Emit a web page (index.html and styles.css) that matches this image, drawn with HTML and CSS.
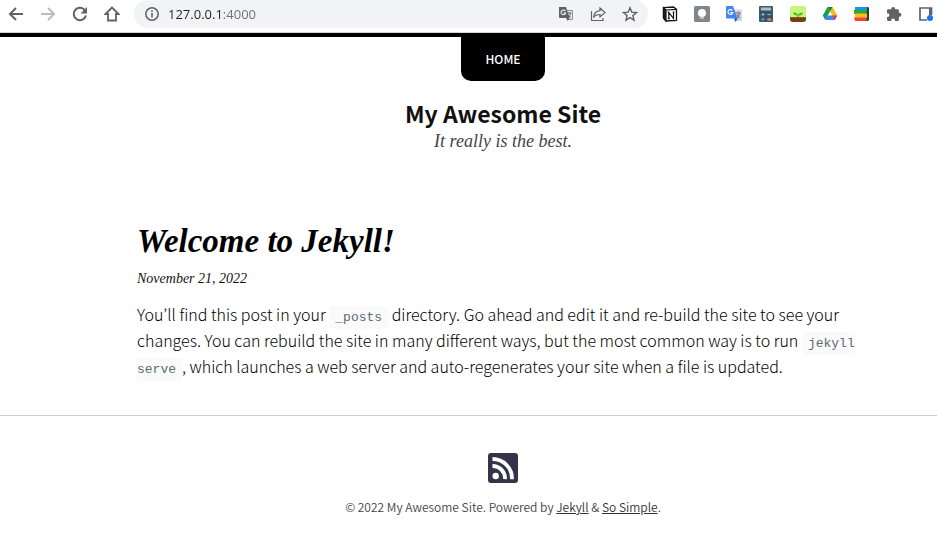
FILE: index.html
```html
<!DOCTYPE html>
<html lang="en">
<head>
<meta charset="utf-8">
<meta name="viewport" content="width=device-width, initial-scale=1">
<title>My Awesome Site</title>
<link rel="stylesheet" href="styles.css">
</head>
<body>
<div class="toolbar">
  <button class="tool" aria-label="Back"><svg viewBox="0 0 16 16" width="16" height="16"><path d="M15 8H2M8 2L2 8l6 6" fill="none" stroke="#5f6368" stroke-width="2"/></svg></button>
  <button class="tool" aria-label="Forward"><svg viewBox="0 0 16 16" width="16" height="16"><path d="M1 8h13M8 2l6 6-6 6" fill="none" stroke="#babcbe" stroke-width="2"/></svg></button>
  <button class="tool" aria-label="Reload"><svg viewBox="0 0 16 16" width="16" height="16"><path d="M13.2 4.6A6.2 6.2 0 1 0 14 9.500" fill="none" stroke="#5f6368" stroke-width="2"/><path d="M15 1v6.500H8.500z" fill="#5f6368"/></svg></button>
  <button class="tool" aria-label="Home"><svg viewBox="0 0 16 16" width="16" height="16"><path d="M8 1.500L1.600 8H4v6.500h8V8h2.400z" fill="none" stroke="#5f6368" stroke-width="1.800"/></svg></button>
  <div class="omnibox">
    <svg viewBox="0 0 14 14" width="14" height="14" aria-hidden="true"><circle cx="7" cy="7" r="6.200" fill="none" stroke="#5f6368" stroke-width="1.500"/><path d="M7 6v4.500M7 3.300v1.600" stroke="#5f6368" stroke-width="1.600"/></svg>
    <input class="address" type="text" value="127.0.0.1:4000" aria-label="Address">
    <button class="tool" aria-label="Translate this page"><svg viewBox="0 0 16 16" width="16" height="16"><path d="M6.500 4.500h7.900v9H9.500" fill="none" stroke="#85888c"/><path d="M1 1h7l3.500 11H2a1 1 0 0 1-1-1z" fill="#5f6368"/><path d="M7.300 5.100A2.300 2.300 0 1 0 7.600 7H5.500" fill="none" stroke="#f1f3f4" stroke-width="1.100"/><path d="M8.500 7h5M11 5.800V7M12.600 7c-.3 2-1.300 3.300-2.900 4.400M9.800 8.200c.6 1.500 1.600 2.600 3.100 3.300" fill="none" stroke="#5f6368"/><path d="M8 12l1.700 3 2-3z" fill="#5f6368"/></svg></button>
    <button class="tool" aria-label="Share"><svg viewBox="0 0 16 16" width="16" height="16"><path d="M1.500 5v9.500H13V12M10 2l5 4.500-5 4.500V8.500C7 8.500 5 9.400 3.500 11.500 4 7.500 6.500 5 10 4.700z" fill="none" stroke="#5f6368" stroke-width="1.200"/></svg></button>
    <button class="tool" aria-label="Bookmark"><svg viewBox="0 0 16 16" width="16" height="16"><path d="M8 1.800l1.800 4.300 4.700.4-3.600 3.100 1.100 4.600-4-2.500-4 2.500 1.100-4.600L1.500 6.500l4.700-.4z" fill="none" stroke="#5f6368" stroke-width="1.400"/></svg></button>
  </div>
  <div class="extensions">
    <button class="tool" aria-label="Notion"><svg viewBox="0 0 16 16" width="16" height="16"><path d="M1.500 1.700L11.500 1l3 2.300v11L4 15l-2.500-3z" fill="#fff" stroke="#111" stroke-width="1.300"/><path d="M1.500 1.700L4 4v11l-2.500-3zM4 4l10.500-.7" fill="#222" stroke="#111" stroke-width="1.200"/><path d="M6.800 12.500V6.500l4.700 6V6M5.800 6.300h1.500M10.700 6.200h1.700M5.800 12.600h2" fill="none" stroke="#111" stroke-width="1.200"/></svg></button>
    <button class="tool" aria-label="Keep"><svg viewBox="0 0 16 16" width="16" height="16"><rect width="16" height="16" rx="1.500" fill="#80868b"/><circle cx="8" cy="7" r="4" fill="#fff"/><path d="M6 9h4v3.500H6z" fill="#fff"/><path d="M6 11.300h4" stroke="#aaa"/></svg></button>
    <button class="tool" aria-label="Google Translate"><svg viewBox="0 0 16 16" width="16" height="16"><path d="M6 3.500h9q1 0 1 1V15H9z" fill="#d5d7da"/><path d="M1 0h6l4.500 12.500H1a1 1 0 0 1-1-1V1a1 1 0 0 1 1-1z" fill="#4285f4"/><path d="M8 12.500h3.500L9.700 16z" fill="#174ea6"/><path d="M6.300 4.500A2.400 2.400 0 1 0 6.700 6.500H4.500" fill="none" stroke="#fff" stroke-width="1.200"/><path d="M9.300 7h5.500M12 5.800V7M13.700 7c-.4 2.300-1.400 3.700-2.700 4.700M10.800 8.500c.7 1.700 1.700 2.800 3.300 3.500" fill="none" stroke="#69777e" stroke-width="1.100"/></svg></button>
    <button class="tool" aria-label="Calculator"><svg viewBox="0 0 16 16" width="16" height="16"><rect x="1" width="14" height="16" rx="1" fill="#3c5a74"/><path d="M3 1.500h10v3H3z" fill="#a9c3b4"/><path d="M1 6h14M8 6V16M1 11.200h14" stroke="#2b455c" stroke-width=".7"/><path d="M3.500 8.500h3M5 7v3M9.500 8.500h3M4 12.300l2 2M6 12.300l-2 2" stroke="#a8bdca" stroke-width=".9"/><path d="M9 12h4.500v3H9z" fill="#b85959"/><path d="M10 13h2.500M10 14.200h2.500" stroke="#e0aaa9" stroke-width=".6"/></svg></button>
    <button class="tool" aria-label="Plant"><svg viewBox="0 0 16 16" width="16" height="16"><rect width="16" height="16" rx="3" fill="#c5f57a"/><path d="M0 11h16v2a3 3 0 0 1-3 3H3a3 3 0 0 1-3-3z" fill="#70401b"/><path d="M0 11.500h16" stroke="#8d5723"/><path d="M8 11V9" stroke="#4a961e"/><path d="M8 9.500C5.500 9.800 3.500 8.700 3 6.500c3-.2 4.700.8 5 3zM8 9.500C8.500 7.500 10 6.500 13 7c-.5 1.800-2.300 2.800-5 2.500z" fill="#55b522"/></svg></button>
    <button class="tool" aria-label="Google Drive"><svg viewBox="0 0 16 16" width="16" height="16"><path d="M5.500 1L.8 9.500l2.400 4.500L8 5.500z" fill="#0f9d58"/><path d="M5.500 1h5L15.300 9.500h-4.800z" fill="#ffba00"/><path d="M5.500 1h5L8 5.500z" fill="#188038"/><path d="M5.500 9.500h9.800L12.800 14H3.200z" fill="#4285f4"/><path d="M10.500 9.500h4.800L12.800 14z" fill="#ea4335"/></svg></button>
    <button class="tool" aria-label="Reading list"><svg viewBox="0 0 16 16" width="16" height="16"><path d="M3 1h11l1 1v12l-1 1H3z" fill="#303b40"/><path d="M1 1h12v4H1z" fill="#1694e8"/><path d="M0 4h12.500v4H0z" fill="#24ac35"/><path d="M1 7.500h12V12H1z" fill="#fdba18"/><path d="M0 11.500h12.500V15H1z" fill="#ef4635"/></svg></button>
    <button class="tool" aria-label="Extensions"><svg viewBox="0 0 16 16" width="16" height="16"><path d="M1 4.500Q1 3.300 2.200 3.300H5.200V3a2 2 0 0 1 4 0v.3h2.500q1.200 0 1.200 1.200v2.300h.5a2 2 0 0 1 0 4h-.5v3q0 1.200-1.200 1.200H9V14.500a1.900 1.900 0 0 0-3.800 0V15H2.200Q1 15 1 13.800V11h.5a1.900 1.900 0 0 0 0-3.800H1z" fill="#5f6368"/></svg></button>
    <button class="tool" aria-label="Side panel"><svg viewBox="0 0 16 16" width="16" height="16"><path d="M9 14H2V2h11.500v7" fill="none" stroke="#5f6368" stroke-width="1.700"/><path d="M11 2h3v7h-3z" fill="#5f6368"/><circle cx="12" cy="12" r="3" fill="#1a73e8"/></svg></button>
  </div>
</div>
<div class="page">
  <header class="masthead">
    <nav class="menu"><a href="#">HOME</a></nav>
    <p class="site-title">My Awesome Site</p>
    <p class="tagline">It really is the best.</p>
  </header>
  <main class="content">
    <article>
      <h1 class="post-title">Welcome to Jekyll!</h1>
      <time class="post-date" datetime="2022-11-21">November 21, 2022</time>
      <p class="excerpt">You’ll find this post in your <code>_posts</code> directory. Go ahead and edit it and re-build the site to see your changes. You can rebuild the site in many different ways, but the most common way is to run <code>jekyll serve</code>, which launches a web server and auto-regenerates your site when a file is updated.</p>
    </article>
  </main>
  <footer class="footer">
    <a class="feed" href="#" aria-label="Feed"><svg viewBox="0 0 30 30" width="30" height="30"><rect width="30" height="30" rx="3" fill="#33344a"/><circle cx="7.700" cy="23" r="3.200" fill="#fff"/><path d="M4.500 13A12.500 12.500 0 0 1 17 26.200M4.500 6A19.500 19.500 0 0 1 24 26.200" fill="none" stroke="#fff" stroke-width="3.800"/></svg></a>
    <p class="copyright">© 2022 My Awesome Site. Powered by <a href="#">Jekyll</a> &amp; <a href="#">So Simple</a>.</p>
  </footer>
</div>
</body>
</html>
```
FILE: styles.css
```css
* {
  box-sizing: border-box;
}

body {
  margin: 0;
  overflow-x: hidden;
  background: #fff;
  color: #111;
  font-family: "Noto Sans CJK KR", "Open Sans", sans-serif;
}

p,
h1 {
  margin: 0;
}

svg {
  display: block;
}

.toolbar {
  display: flex;
  align-items: center;
  gap: 16px;
  height: 33px;
  padding: 0 3px 4px 8px;
  border-bottom: 1px solid #d5d7da;
}

.tool {
  flex: none;
  padding: 0;
  border: 0;
  background: none;
}

.omnibox {
  display: flex;
  flex: 1;
  align-items: center;
  gap: 16px;
  min-width: 0;
  height: 28px;
  margin-left: -2px;
  padding: 0 10px 0 11px;
  border-radius: 14px;
  background: #f1f3f4;
}

.address {
  flex: 1;
  min-width: 0;
  margin-left: -7px;
  padding: 0;
  border: 0;
  outline: 0;
  background: linear-gradient(90deg, #202124 55px, #6b6f73 55px);
  background-clip: text;
  color: transparent;
  font: 13px "Open Sans", sans-serif;
}

.extensions {
  display: flex;
  gap: 16px;
  margin-left: -2px;
}

.page {
  border-top: 4px solid #000;
}

.masthead,
.content,
.footer {
  padding-left: 69px;
  text-align: center;
}

.menu {
  display: flex;
  justify-content: center;
}

.menu a {
  padding: 12px 24px;
  border-radius: 0 0 10px 10px;
  background: #000;
  color: #fff;
  font-size: 12px;
  font-weight: 500;
  line-height: 20px;
  text-decoration: none;
}

.site-title {
  margin-top: 16px;
  font-size: 23px;
  font-weight: 700;
  line-height: 32px;
}

.tagline {
  color: #444;
  font: italic 18px/24px "Liberation Serif", serif;
}

.content article {
  max-width: 732px;
  margin: 0 auto;
  padding: 66px 0 36px;
  text-align: left;
}

.post-title {
  color: #000;
  font: italic bold 33px/44px "Liberation Serif", serif;
}

.post-date {
  display: block;
  margin-top: 6px;
  font: italic 14px/20px "Liberation Serif", serif;
}

.excerpt {
  margin-top: 12px;
  color: #000;
  font-size: 16px;
  font-weight: 300;
  line-height: 26px;
}

code {
  padding: 4px 6px;
  border-radius: 3px;
  background: #fafafa;
  color: #5b6b75;
  font: 13px/16px "Liberation Mono", monospace;
}

.footer {
  display: flex;
  flex-direction: column;
  align-items: center;
  gap: 14px;
  padding-top: 37px;
  padding-bottom: 28px;
  border-top: 1px solid #ccc;
}

.copyright {
  color: #444;
  font-size: 12px;
  font-weight: 350;
  line-height: 20px;
}

.copyright a {
  color: #333;
}
```
